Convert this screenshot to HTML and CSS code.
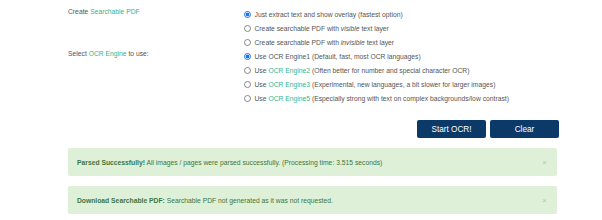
FILE: index.html
```html
<!DOCTYPE html>
<html>
<head>
<meta charset="utf-8">
<link rel="stylesheet" href="styles.css">
</head>
<body>
<div class="page">
  <div class="form-row">
    <div class="label">Create <span class="link">Searchable PDF</span></div>
    <div class="options">
      <label class="opt"><input type="radio" name="pdf" checked><span>Just extract text and show overlay (fastest option)</span></label>
      <label class="opt"><input type="radio" name="pdf"><span>Create searchable PDF with <i>visible</i> text layer</span></label>
      <label class="opt"><input type="radio" name="pdf"><span>Create searchable PDF with <i>invisible</i> text layer</span></label>
    </div>
  </div>
  <div class="form-row">
    <div class="label">Select <span class="link">OCR Engine</span> to use:</div>
    <div class="options">
      <label class="opt"><input type="radio" name="eng" checked><span>Use OCR Engine1 (Default, fast, most OCR languages)</span></label>
      <label class="opt"><input type="radio" name="eng"><span>Use <span class="link">OCR Engine2</span> (Often better for number and special character OCR)</span></label>
      <label class="opt"><input type="radio" name="eng"><span>Use <span class="link">OCR Engine3</span> (Experimental, new languages, a bit slower for larger images)</span></label>
      <label class="opt"><input type="radio" name="eng"><span>Use <span class="link">OCR Engine5</span> (Especially strong with text on complex backgrounds/low contrast)</span></label>
    </div>
  </div>
  <div class="buttons">
    <button class="btn">Start OCR!</button>
    <button class="btn">Clear</button>
  </div>
  <div class="alert">
    <span><b>Parsed Successfully!</b> All images / pages were parsed successfully. (Processing time: 3.515 seconds)</span>
    <span class="close">×</span>
  </div>
  <div class="alert">
    <span><b>Download Searchable PDF:</b> Searchable PDF not generated as it was not requested.</span>
    <span class="close">×</span>
  </div>
</div>
</body>
</html>
```
FILE: styles.css
```css
html, body {
  margin: 0;
  padding: 0;
  background: #fff;
}
body {
  font-family: "Liberation Sans", Arial, sans-serif;
  font-size: 6.75px;
  color: #555;
}
.page {
  width: 489px;
  margin-left: 68px;
  padding-top: 7.5px;
}
.form-row {
  display: grid;
  grid-template-columns: 176px 1fr;
}
.label {
  line-height: 7px;
}
.link {
  color: #36b48f;
}
.options {
  display: flex;
  flex-direction: column;
}
.opt {
  display: flex;
  align-items: center;
  height: 14px;
  line-height: 14px;
  white-space: nowrap;
}
.opt input {
  -webkit-appearance: none;
  appearance: none;
  box-sizing: border-box;
  width: 7px;
  height: 7px;
  margin: 0 4px 0 -0.5px;
  border: 0.75px solid #888;
  border-radius: 50%;
  background: #fff;
}
.opt input:checked {
  border-color: #1a73e8;
  background: radial-gradient(circle, #1a73e8 0 1.8px, #fff 2.1px);
}
.buttons {
  display: flex;
  justify-content: flex-end;
  gap: 4px;
  margin-top: 14.5px;
  margin-right: -2px;
}
.btn {
  width: 69px;
  height: 18px;
  border: 0;
  border-radius: 2px;
  background: #0b3a68;
  color: #fff;
  font-family: "Liberation Sans", Arial, sans-serif;
  font-size: 8.2px;
  padding: 0;
}
.alert {
  display: flex;
  align-items: center;
  justify-content: space-between;
  box-sizing: border-box;
  height: 28px;
  margin-top: 10px;
  padding: 0 9px;
  background: #dff0d8;
  border-radius: 2px;
  color: #3c763d;
}
.alert b {
  font-weight: bold;
}
.close {
  color: #b6c4b0;
  font-size: 8px;
  margin-right: 1px;
}
```
